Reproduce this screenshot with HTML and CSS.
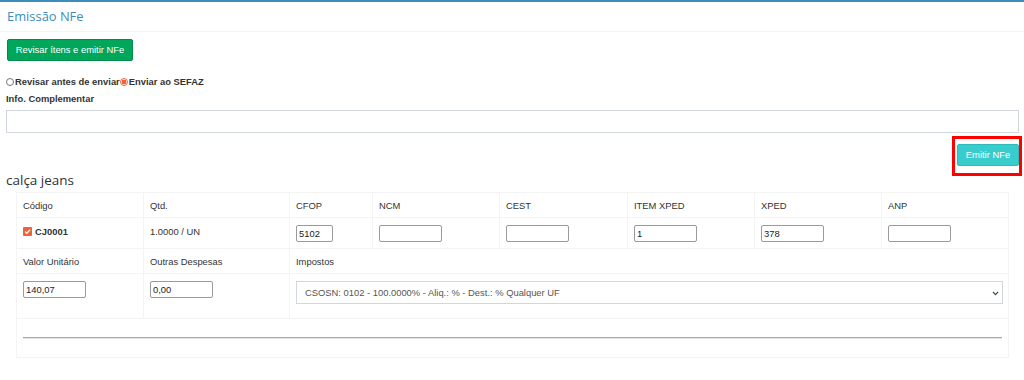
FILE: index.html
```html
<!DOCTYPE html>
<html lang="pt-BR">
<head>
<meta charset="utf-8">
<title>Emissão NFe</title>
<link rel="stylesheet" href="styles.css">
</head>
<body>
<div class="box">
  <div class="box-header"><h3 class="box-title">Emissão NFe</h3></div>
  <div class="box-body">
    <button class="btn btn-success" type="button">Revisar ítens e emitir NFe</button>
    <div class="radios">
      <label class="radio"><span class="radio-dot"></span>Revisar antes de enviar</label><label class="radio"><span class="radio-dot checked"></span>Enviar ao SEFAZ</label>
    </div>
    <label class="lbl">Info. Complementar</label>
    <input class="form-control" type="text">
    <div class="actions">
      <span class="highlight"><button class="btn btn-info" type="button">Emitir NFe</button></span>
    </div>
    <h4 class="item-title">calça jeans</h4>
    <table class="items">
      <colgroup>
        <col class="c127"><col class="c146"><col class="c83"><col class="c127"><col class="c128"><col class="c127"><col class="c127"><col class="c127">
      </colgroup>
      <tr class="head">
        <td>Código</td><td>Qtd.</td><td>CFOP</td><td>NCM</td><td>CEST</td><td>ITEM XPED</td><td>XPED</td><td>ANP</td>
      </tr>
      <tr class="data">
        <td><span class="cb"><svg width="9" height="9" viewBox="0 0 9 9"><path d="M2 4.6 L3.8 6.3 L7.2 2.6" fill="none" stroke="#fff" stroke-width="1.3"/></svg></span><b>CJ0001</b></td>
        <td>1.0000 / UN</td>
        <td><input class="sm w37" type="text" value="5102"></td>
        <td><input class="sm" type="text"></td>
        <td><input class="sm" type="text"></td>
        <td><input class="sm" type="text" value="1"></td>
        <td><input class="sm" type="text" value="378"></td>
        <td><input class="sm" type="text"></td>
      </tr>
      <tr class="head">
        <td>Valor Unitário</td><td>Outras Despesas</td><td colspan="6">Impostos</td>
      </tr>
      <tr class="data2">
        <td><input class="sm" type="text" value="140,07"></td>
        <td><input class="sm" type="text" value="0,00"></td>
        <td colspan="6">
          <div class="select-wrap">
            <select class="select"><option>CSOSN: 0102 - 100.0000% - Aliq.: % - Dest.: % Qualquer UF</option></select>
            <svg class="chev" width="7" height="5" viewBox="0 0 7 5"><path d="M1 1 L3.5 3.6 L6 1" fill="none" stroke="#444" stroke-width="1.1"/></svg>
          </div>
        </td>
      </tr>
      <tr class="foot">
        <td colspan="8"><hr class="sep"></td>
      </tr>
    </table>
  </div>
</div>
</body>
</html>
```

FILE: styles.css
```css
* { box-sizing: border-box; }
html, body { margin: 0; padding: 0; background: #fff; }
body {
  font-family: "Liberation Sans", Arial, sans-serif;
  font-size: 9.4px;
  color: #333;
  width: 1024px;
  height: 380px;
  overflow: hidden;
}
.box {
  border-top: 2px solid #3c8dbc;
}
.box-header {
  height: 30px;
  border-bottom: 1px solid #f4f4f4;
  padding: 0 7px;
}
.box-title {
  margin: 0;
  font-family: "Open Sans", sans-serif;
  font-weight: 400;
  font-size: 12.9px;
  line-height: 29px;
  color: #3c8dbc;
}
.box-body {
  padding: 7px 5px 0 6px;
}
.btn {
  font-family: "Liberation Sans", Arial, sans-serif;
  font-size: 9.4px;
  border-radius: 2px;
  border: 1px solid transparent;
  color: #fff;
  height: 22px;
  line-height: 20px;
  padding: 0 7px;
  cursor: pointer;
}
.btn-success {
  background: #00a65a;
  border-color: #008d4c;
  margin-left: 1px;
  width: 126px;
  display: block;
}
.btn-info {
  background: #39cccc;
  border-color: #30bbbb;
  width: 62px;
  display: block;
}
.radios {
  margin-top: 14px;
  line-height: 14px;
  font-weight: bold;
  display: flex;
}
.radio {
  display: flex;
  align-items: center;
}
.radio-dot {
  width: 8px;
  height: 8px;
  border: 1px solid #767676;
  border-radius: 50%;
  margin-right: 1px;
  display: inline-block;
  background: #fff;
}
.radio-dot.checked {
  border-color: #f0643c;
  background: radial-gradient(circle, #f0643c 0 2.3px, #fff 2.6px);
}
.lbl {
  display: block;
  margin-top: 3px;
  font-weight: bold;
  line-height: 14px;
}
.form-control {
  display: block;
  width: 1013px;
  height: 23px;
  margin-top: 4px;
  border: 1px solid #d2d6de;
  border-radius: 0;
  background: #fff;
  padding: 0 8px;
  font-family: inherit;
  font-size: 9.4px;
}
.actions {
  display: flex;
  justify-content: flex-end;
  margin-top: 11px;
  margin-right: 0;
}
.highlight {
  position: relative;
  display: block;
}
.highlight::after {
  content: "";
  position: absolute;
  left: -5px;
  right: -3px;
  top: -8px;
  bottom: -10px;
  border: 3px solid #ff0000;
  pointer-events: none;
}
.item-title {
  margin: 6px 0 0 0;
  font-family: "Open Sans", sans-serif;
  font-weight: 400;
  font-size: 13.5px;
  line-height: 17px;
  color: #333;
}
.items {
  margin: 3px 0 0 10px;
  width: 992px;
  table-layout: fixed;
  border-collapse: collapse;
  border: 1px solid #f4f4f4;
}
.c127 { width: 127px; }
.c128 { width: 128px; }
.c146 { width: 146px; }
.c83 { width: 83px; }
.items td {
  border: 1px solid #f4f4f4;
  padding: 0 6px;
  line-height: 13px;
  vertical-align: top;
}
.items tr.head td { height: 24px; padding-top: 6px; padding-bottom: 5px; }
.items tr.data td { padding-top: 7px; padding-bottom: 6px; height: 30px; }
.items tr.data2 td { padding-top: 7px; height: 45px; }
.items tr.foot td { height: 39px; vertical-align: middle; }
.cb {
  display: inline-block;
  width: 9px;
  height: 9px;
  background: #ee6236;
  border-radius: 1px;
  vertical-align: -1px;
  margin-right: 3px;
}
.cb svg { display: block; }
.sm {
  display: block;
  width: 63px;
  height: 17px;
  border: 1px solid #9a9a9a;
  border-radius: 2px;
  padding: 0 2px;
  font-family: inherit;
  font-size: 9.4px;
  color: #222;
  background: #fff;
}
.sm.w37 { width: 37px; }
.select-wrap {
  position: relative;
  width: 707px;
}
.select {
  appearance: none;
  -webkit-appearance: none;
  display: block;
  width: 707px;
  height: 23px;
  border: 1px solid #d2d6de;
  border-radius: 0;
  background: #fff;
  padding: 0 8px;
  font-family: inherit;
  font-size: 9.4px;
  color: #555;
}
.chev {
  position: absolute;
  right: 4px;
  top: 10px;
}
.sep {
  margin: 0;
  border: 0;
  border-top: 1px solid #a8a8a8;
  border-bottom: 1px solid #e6e6e6;
  height: 0;
}
```
